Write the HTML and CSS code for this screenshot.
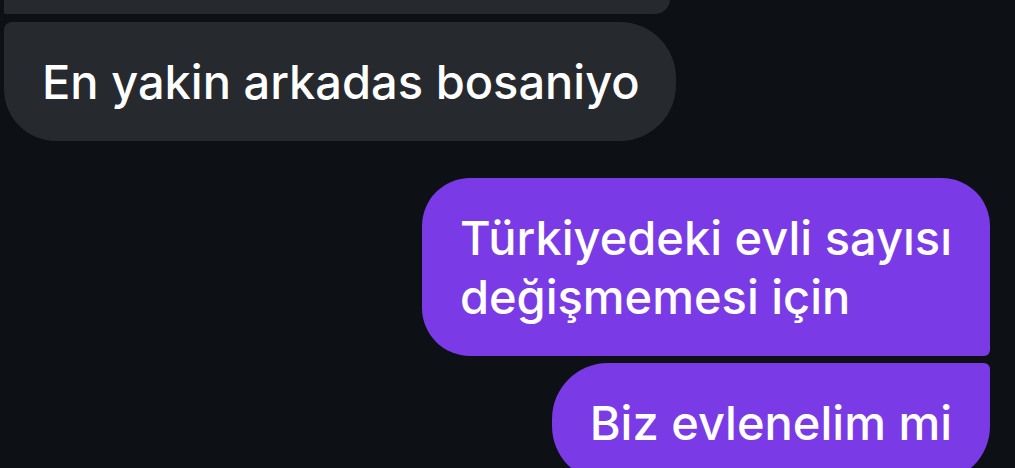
FILE: index.html
```html
<!DOCTYPE html>
<html lang="tr">
<head>
    <meta charset="UTF-8">
    <meta name="viewport" content="width=device-width, initial-scale=1.0">
    <title>Mesajlar</title>
    <link rel="stylesheet" href="styles.css">
</head>
<body>
    <div class="chat">
        <div class="bubble incoming first"></div>
        <div class="bubble incoming last">En yakin arkadas bosaniyo</div>

        <div class="bubble outgoing first">Türkiyedeki evli sayısı<br>değişmemesi için</div>
        <div class="bubble outgoing last">Biz evlenelim mi</div>
    </div>
</body>
</html>
```

FILE: styles.css
```css
body {
    margin: 0;
    background-color: #0d1014;
    font-family: Inter, "Noto Sans", sans-serif;
    overflow: hidden;
}
.chat {
    display: flex;
    flex-direction: column;
    padding: 0 25px 0 4px;
}
.bubble {
    font-size: 47px;
    font-weight: 550;
    line-height: 59px;
    color: #fff;
    padding: 30px 38px;
    border-radius: 48px;
}
.incoming {
    align-self: flex-start;
    background-color: #26292e;
}
.incoming.first {
    width: 666px;
    height: 30px;
    padding: 0;
    margin-top: -16px;
    border-radius: 0 48px 48px 6px;
}
.incoming.last {
    margin-top: 8px;
    padding-right: 36px;
    border-radius: 8px 56px 56px 52px;
}
.outgoing {
    align-self: flex-end;
    background-color: #7a3be6;
}
.outgoing.first {
    margin-top: 37px;
    border-radius: 48px 48px 6px 48px;
}
.outgoing.last {
    margin-top: 7px;
    border-radius: 56px 6px 56px 56px;
}
```
